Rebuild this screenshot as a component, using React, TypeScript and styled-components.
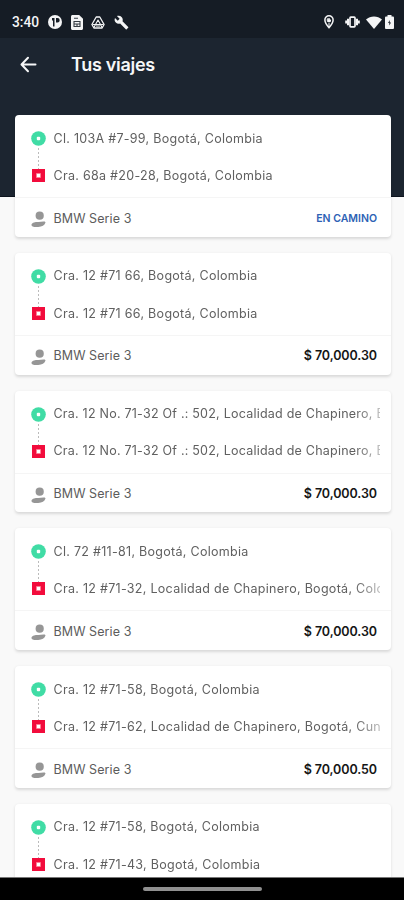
import React from "react";
import styled, { createGlobalStyle } from "styled-components";

const GlobalStyle = createGlobalStyle`
  *, *::before, *::after { box-sizing: border-box; }
  body { margin: 0; font-family: Inter, Roboto, sans-serif; }
`;

const Screen = styled.div`
  display: flex;
  flex-direction: column;
  width: 404px;
  height: 900px;
  overflow: hidden;
  background: linear-gradient(#1c2530 0 196px, #0c131d 196px 197.5px, #f9f9f9 197.5px);
`;

const StatusBar = styled.header`
  display: flex;
  flex: none;
  align-items: center;
  justify-content: space-between;
  height: 38px;
  padding: 6px 10px 0 12px;
  background: #151c25;
  color: #f4f5f6;
`;

const StatusGroup = styled.div`
  display: flex;
  align-items: center;
  gap: 8.6px;
  svg { display: block; flex: none; }
`;

const SystemIcons = styled(StatusGroup)`
  gap: 3px;
  svg:first-child { margin-right: 8px; }
  svg:nth-child(2) { margin-right: 3px; }
`;

const Clock = styled.span`
  width: 27.4px;
  font: 500 13.8px/16px Roboto, sans-serif;
  white-space: nowrap;
`;

const AppBar = styled.div`
  display: flex;
  flex: none;
  align-items: center;
  gap: 34px;
  height: 77px;
  padding: 0 20px 24px;
  color: #f6f7f8;
`;

const BackButton = styled.button`
  width: 17px;
  height: 17px;
  padding: 0;
  border: 0;
  background: none;
  color: inherit;
  svg { display: block; }
`;

const Title = styled.h1`
  margin: 0;
  font-size: 18px;
  line-height: 24px;
  font-weight: 600;
  letter-spacing: -0.3px;
`;

const TripList = styled.main`
  display: flex;
  flex: 1;
  flex-direction: column;
  gap: 16px;
  min-height: 0;
  padding: 0 13px 0 14.5px;
  overflow: hidden;
`;

const Card = styled.article`
  flex: none;
  height: 121.8px;
  border-radius: 4px;
  background: #fff;
  box-shadow: 0 1.5px 3px rgba(0, 0, 0, 0.13);
`;

const Route = styled.div`
  display: grid;
  grid-template-columns: 14px 1fr;
  column-gap: 8.5px;
  height: 83px;
  padding: 14.5px 11.5px 0 16.5px;
  border-bottom: 1px solid #f5f5f5;
`;

const Track = styled.div`
  display: flex;
  flex-direction: column;
  align-items: center;
  padding-top: 1.5px;
  svg { display: block; flex: none; }
`;

const Dots = styled.div`
  width: 1px;
  height: 23px;
  background: repeating-linear-gradient(transparent 0 2px, #bbb 2px 4px);
`;

const Stops = styled.div`
  display: grid;
  grid-template-rows: 18px 18px;
  row-gap: 19.3px;
  min-width: 0;
`;

const Address = styled.span<{ $tight: boolean }>`
  overflow: hidden;
  color: #606060;
  font-size: 12.5px;
  line-height: 18px;
  letter-spacing: ${(p) => (p.$tight ? 0.23 : 0.29)}px;
  white-space: nowrap;
  mask-image: linear-gradient(90deg, #000 300px, rgba(0, 0, 0, 0.4) 326px);
`;

const Footer = styled.div`
  display: flex;
  align-items: center;
  height: 38px;
  padding: 2px 14px 0 16.5px;
  svg { flex: none; margin: 3px 7.5px 0 0; }
`;

const Vehicle = styled.span`
  flex: 1;
  color: #5c5c5c;
  font-size: 12.5px;
  letter-spacing: 0.08px;
`;

const Price = styled.strong`
  color: #151515;
  font-size: 12.5px;
  font-weight: 600;
  letter-spacing: -0.08px;
`;

const Status = styled.strong`
  color: #2d62b5;
  font-size: 10.5px;
  font-weight: 600;
  letter-spacing: 0;
`;

const NavigationBar = styled.footer`
  display: flex;
  flex: none;
  justify-content: center;
  height: 23px;
  padding-top: 9px;
  border-top: 1px solid #777;
  background: #000;
`;

const HomeHandle = styled.div`
  width: 119px;
  height: 4px;
  border-radius: 2px;
  background: #909090;
`;

const OriginIcon = () => (
  <svg width="15" height="15" viewBox="0 0 15 15">
    <circle cx="7.5" cy="7.5" r="7.3" fill="#40dca5" />
    <rect x="5.8" y="5.8" width="3.4" height="3.4" rx="1" fill="#fff" />
  </svg>
);

const DestinationIcon = () => (
  <svg width="13" height="13" viewBox="0 0 13 13">
    <path d="M0 0h13v13H0z" fill="#f20c3c" />
    <path d="M4.2 4.2h4.6v4.6H4.2z" fill="#ff9eae" />
    <path d="M5 5h3v3H5z" fill="#fff" />
  </svg>
);

const DriverIcon = () => (
  <svg width="15" height="17" viewBox="0 0 15 17" fill="#969696">
    <circle cx="8.7" cy="4.7" r="4.1" />
    <path d="M.5 14c0-2.200 3-3.100 6-3 2 .1 4-.2 6-.5 1.400-.2 2.300.4 1.900 1.300-.8 2.400-3.300 3.900-7.200 4.200C3.300 16.400.5 15.700.5 14Z" />
  </svg>
);

const BackIcon = () => (
  <svg width="17" height="17" viewBox="0 0 17 17" fill="none" stroke="currentColor" strokeWidth="2" strokeLinecap="round" strokeLinejoin="round">
    <path d="M15.500 8.500H2M8 1.800 1.500 8.500 8 15.200" />
  </svg>
);

const ParkingIcon = () => (
  <svg width="14" height="14" viewBox="0 0 14 14">
    <circle cx="7" cy="7" r="7" fill="currentColor" />
    <path d="M4 3h2.500v8.500H5V5.500H4zM8 3h1.500a2.200 2.200 0 0 1 0 4.400H8z" fill="#151c25" />
  </svg>
);

const DocumentIcon = () => (
  <svg width="12" height="15" viewBox="0 0 12 15">
    <path d="M1.500 0h6.700L12 3.800v9.700c0 .8-.7 1.500-1.500 1.500h-9C.7 15 0 14.300 0 13.500v-12C0 .7.700 0 1.500 0Z" fill="currentColor" />
    <path d="M3 3.200h4M3 6.500h6v5H3zM3 9h6M6 9v2.500" fill="none" stroke="#353c44" strokeWidth="1.100" />
  </svg>
);

const DriveIcon = () => (
  <svg width="14" height="13" viewBox="0 0 14 13" fill="none" stroke="currentColor" strokeWidth="1.300" strokeLinejoin="round">
    <path d="M5.200 1h3.600l4.300 7.500-2 3.500H2.900l-2-3.500Z" />
    <path d="m7 4 2.500 4.500h-5ZM1.500 8.500h3M9.500 8.500h3M4.500 8.500 3 11.500M9.500 8.500l1.500 3M5 10h4" strokeWidth="1.100" />
  </svg>
);

const WrenchIcon = () => (
  <svg width="15" height="15" viewBox="0 0 24 24" fill="currentColor">
    <path d="m22.700 19-9.100-9.100c.9-2.300.4-5-1.500-6.900-2-2-5-2.400-7.400-1.300L9 6 6 9 1.600 4.700C.4 7.100.9 10.100 2.900 12.100c1.900 1.900 4.600 2.400 6.900 1.500l9.100 9.100c.4.4 1 .4 1.400 0l2.300-2.300c.5-.4.5-1.100.1-1.400Z" />
  </svg>
);

const PinIcon = () => (
  <svg width="10" height="14" viewBox="0 0 10 14">
    <path d="M5 .8A4.100 4.100 0 0 0 .9 5c0 3 4.100 7.700 4.100 7.700S9.100 8 9.100 5A4.100 4.100 0 0 0 5 .8Z" fill="none" stroke="currentColor" strokeWidth="1.500" />
    <path d="M3.300 6.500V3.800H6M3.300 6.500h3.200V4.600M5 7.500v4" stroke="currentColor" fill="none" />
    <circle cx="5" cy="5.200" r="1.300" fill="currentColor" />
  </svg>
);

const VibrateIcon = () => (
  <svg width="15" height="12" viewBox="0 0 15 12" fill="none" stroke="currentColor">
    <rect x="5" y="1.200" width="5" height="9.600" rx=".8" strokeWidth="1.700" />
    <path d="M3 2.800v6.400M12 2.800v6.400M1.200 4.600v2.800M13.800 4.600v2.800" strokeWidth="2" />
  </svg>
);

const WifiIcon = () => (
  <svg width="16" height="13" viewBox="0 0 16 13">
    <path d="M0 3.500C4.500-.5 11.500-.5 16 3.500L8 13Z" fill="currentColor" />
  </svg>
);

const BatteryIcon = () => (
  <svg width="9" height="14" viewBox="0 0 9 14">
    <path d="M2.500 0h4v1.500h1.300c.7 0 1.200.5 1.200 1.200v10c0 .7-.5 1.300-1.200 1.300H1.200C.5 14 0 13.400 0 12.700v-10c0-.7.500-1.200 1.200-1.200h1.300z" fill="currentColor" />
    <path d="M4.700 5 3.100 8h1.200v2.400L6 7.400H4.700z" fill="#151c25" />
  </svg>
);

interface Trip {
  origin: string;
  destination: string;
  price?: string;
}

const trips: Trip[] = [
  { origin: "Cl. 103A #7-99, Bogotá, Colombia", destination: "Cra. 68a #20-28, Bogotá, Colombia" },
  { origin: "Cra. 12 #71 66, Bogotá, Colombia", destination: "Cra. 12 #71 66, Bogotá, Colombia", price: "$ 70,000.30" },
  { origin: "Cra. 12 No. 71-32 Of .: 502, Localidad de Chapinero, Bogotá", destination: "Cra. 12 No. 71-32 Of .: 502, Localidad de Chapinero, Bogotá", price: "$ 70,000.30" },
  { origin: "Cl. 72 #11-81, Bogotá, Colombia", destination: "Cra. 12 #71-32, Localidad de Chapinero, Bogotá, Colombia", price: "$ 70,000.30" },
  { origin: "Cra. 12 #71-58, Bogotá, Colombia", destination: "Cra. 12 #71-62, Localidad de Chapinero, Bogotá, Cundinamarca", price: "$ 70,000.50" },
  { origin: "Cra. 12 #71-58, Bogotá, Colombia", destination: "Cra. 12 #71-43, Bogotá, Colombia", price: "$ 70,000.30" },
];

const TripCard = ({ origin, destination, price }: Trip) => (
  <Card>
    <Route>
      <Track>
        <OriginIcon />
        <Dots />
        <DestinationIcon />
      </Track>
      <Stops>
        <Address $tight={origin.length > 50}>{origin}</Address>
        <Address $tight={origin.length > 50}>{destination}</Address>
      </Stops>
    </Route>
    <Footer>
      <DriverIcon />
      <Vehicle>BMW Serie 3</Vehicle>
      {price ? <Price>{price}</Price> : <Status>EN CAMINO</Status>}
    </Footer>
  </Card>
);

export default function App() {
  return (
    <>
      <GlobalStyle />
      <Screen>
        <StatusBar>
          <StatusGroup>
            <Clock>3:40</Clock>
            <ParkingIcon />
            <DocumentIcon />
            <DriveIcon />
            <WrenchIcon />
          </StatusGroup>
          <SystemIcons>
            <PinIcon />
            <VibrateIcon />
            <WifiIcon />
            <BatteryIcon />
          </SystemIcons>
        </StatusBar>
        <AppBar>
          <BackButton aria-label="Volver"><BackIcon /></BackButton>
          <Title>Tus viajes</Title>
        </AppBar>
        <TripList>
          {trips.map((trip, index) => <TripCard key={index} {...trip} />)}
        </TripList>
        <NavigationBar><HomeHandle /></NavigationBar>
      </Screen>
    </>
  );
}
